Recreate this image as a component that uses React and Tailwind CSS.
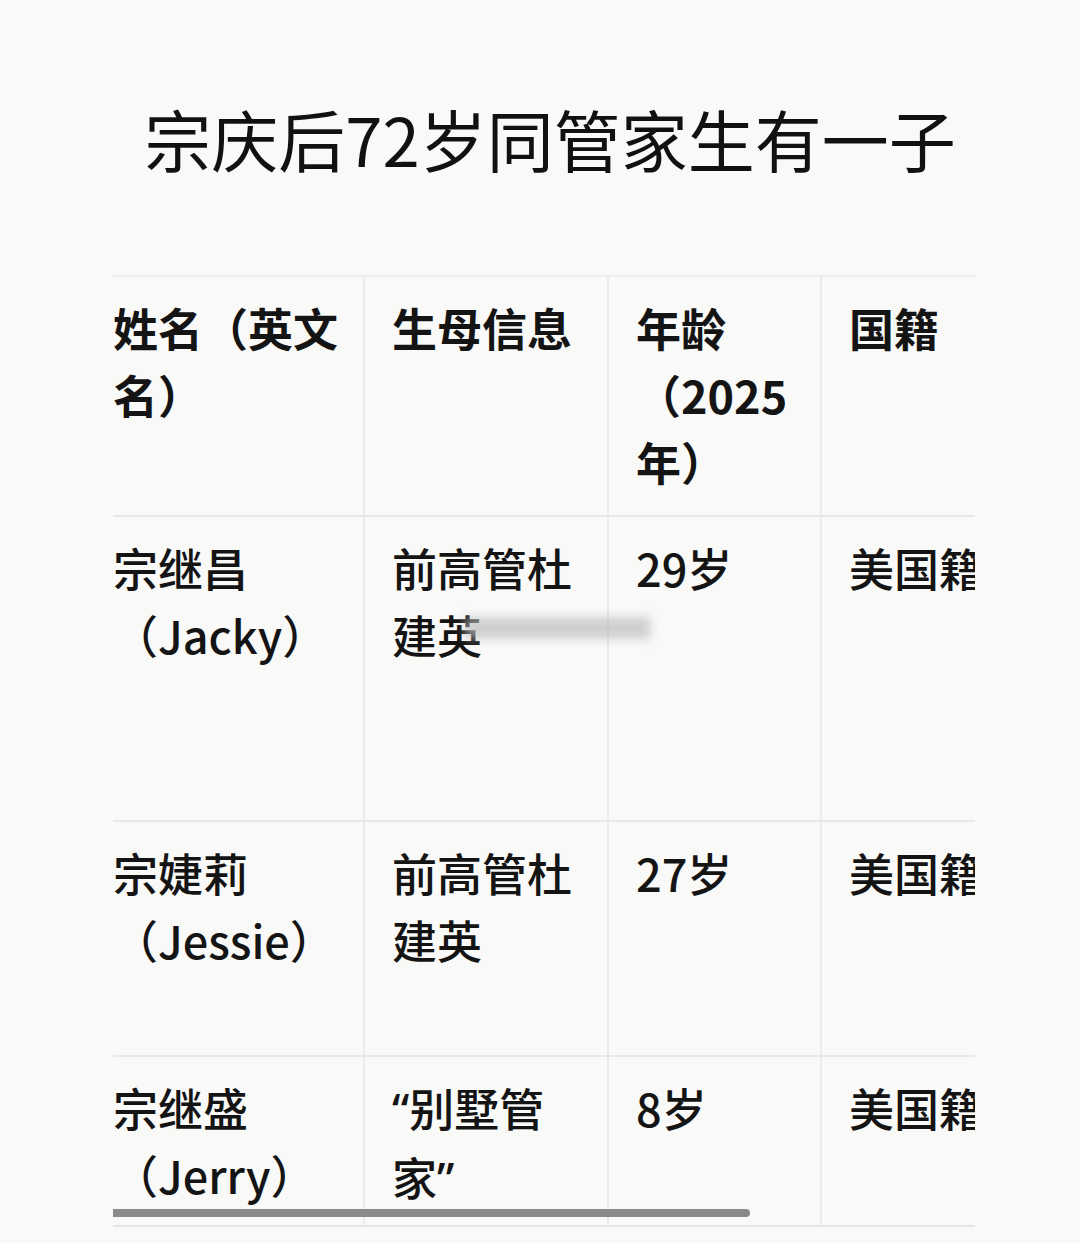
import React from "react";

const Q = ({ children }) => (
  <span style={{ fontFamily: '"Noto Sans", sans-serif' }}>{children}</span>
);

const rows = [
  {
    h: "h-[305px]",
    name: ["宗继昌", "（Jacky）"],
    mother: ["前高管杜", "建英"],
    age: "29岁",
    nation: "美国籍",
    smudge: true,
  },
  {
    h: "h-[235px]",
    name: ["宗婕莉", "（Jessie）"],
    mother: ["前高管杜", "建英"],
    age: "27岁",
    nation: "美国籍",
  },
  {
    h: "h-[170px]",
    name: ["宗继盛", "（Jerry）"],
    mother: [
      <>
        <Q>“</Q>别墅管
      </>,
      <>
        家<Q>”</Q>
      </>,
    ],
    age: "8岁",
    nation: "美国籍",
  },
];

function Lines({ items }) {
  return items.map((t, i) => (
    <div key={i} className="whitespace-nowrap">
      {t}
    </div>
  ));
}

export default function App() {
  return (
    <div
      className="w-[1080px] h-[1243px] bg-[#f9f9f8] text-[#141414] overflow-hidden"
      style={{ fontFamily: '"Noto Sans CJK SC", "Noto Sans", sans-serif' }}
    >
      {/* Title */}
      <h1 className="pt-[104px] pl-[20px] text-center text-[67px] leading-none font-normal text-[#111]">
        宗庆后72岁同管家生有一子
      </h1>

      {/* Table */}
      <div className="relative mt-[104px] ml-[113px] w-[862px] overflow-hidden text-[45px] leading-[67px]">
        {/* Header */}
        <div className="grid grid-cols-[250px_244px_213px_1fr] h-[240px] border-t-2 border-[#ececec] font-bold">
          <div className="pt-[17px]">
            <Lines items={["姓名（英文", "名）"]} />
          </div>
          <div className="pt-[17px] pl-[27px] border-l-2 border-[#ebebeb]">
            <Lines items={["生母信息"]} />
          </div>
          <div className="pt-[17px] pl-[27px] border-l-2 border-[#ebebeb]">
            <Lines items={["年龄", "（2025", "年）"]} />
          </div>
          <div className="pt-[17px] pl-[27px] border-l-2 border-[#ebebeb]">
            <Lines items={["国籍"]} />
          </div>
        </div>

        {rows.map((r, i) => (
          <div
            key={i}
            className={`grid grid-cols-[250px_244px_213px_1fr] ${r.h} border-t-2 border-[#e8e8e8] font-medium`}
          >
            <div className="pt-[17px]">
              <Lines items={r.name} />
            </div>
            <div className="relative pt-[17px] pl-[27px] border-l-2 border-[#ebebeb]">
              <Lines items={r.mother} />
              {r.smudge && (
                <div className="absolute left-[100px] top-[100px] w-[185px] h-[22px] bg-[#bdbdbd]/70 blur-[5px]" />
              )}
            </div>
            <div className="pt-[17px] pl-[27px] border-l-2 border-[#ebebeb]">
              {r.age}
            </div>
            <div className="pt-[17px] pl-[27px] border-l-2 border-[#ebebeb] whitespace-nowrap">
              {r.nation}
            </div>
          </div>
        ))}

        <div className="border-t-2 border-[#e6e6e6]" />

        {/* horizontal scrollbar */}
        <div className="absolute left-[-3px] bottom-[10px] w-[640px] h-[8px] rounded-full bg-[#8a8a8a]" />
      </div>
    </div>
  );
}
